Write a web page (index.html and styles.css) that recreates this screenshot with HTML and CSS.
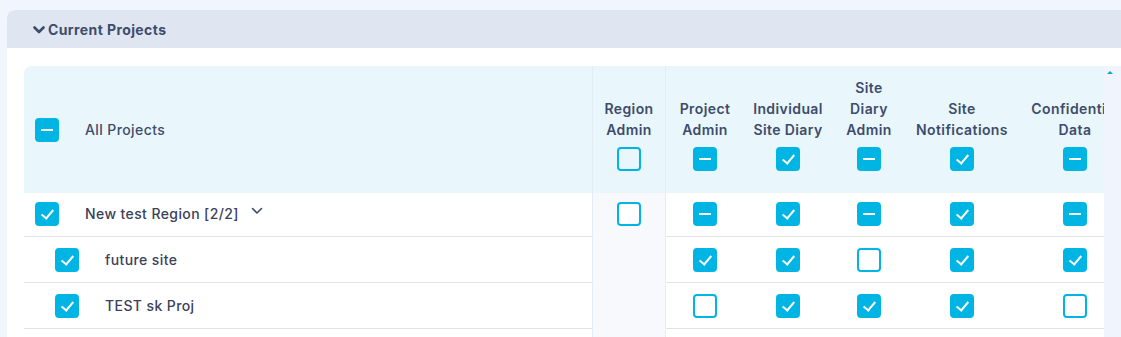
FILE: index.html
```html
<!DOCTYPE html>
<html lang="en">
<head>
<meta charset="UTF-8">
<meta name="viewport" content="width=device-width, initial-scale=1.0">
<title>Current Projects</title>
<link rel="stylesheet" href="styles.css">
</head>
<body>
    <div class="page">
        <div class="panel">
            <div class="panel-header">
                <svg class="caret" width="12" height="8" viewBox="0 0 12 8"><path d="M1.5 1.5 L6 6 L10.5 1.5" fill="none" stroke="#3e4c6b" stroke-width="2.6" stroke-linecap="round" stroke-linejoin="round"/></svg>
                <span>Current Projects</span>
            </div>
            <div class="panel-body">
                <div class="table-wrap">
                    <table class="perm-table">
                        <colgroup>
                            <col style="width: 568px">
                            <col style="width: 74px">
                            <col style="width: 78px">
                            <col style="width: 88px">
                            <col style="width: 74px">
                            <col style="width: 112px">
                            <col style="width: 114px">
                        </colgroup>
                        <thead>
                            <tr>
                                <th class="name-cell">
                                    <div class="name">
                                        <span class="cb partial"></span>
                                        <span>All Projects</span>
                                    </div>
                                </th>
                                <th class="region-col"><div class="label">Region<br>Admin</div><span class="cb"></span></th>
                                <th><div class="label">Project<br>Admin</div><span class="cb partial"></span></th>
                                <th><div class="label">Individual<br>Site Diary</div><span class="cb checked"></span></th>
                                <th><div class="label">Site<br>Diary<br>Admin</div><span class="cb partial"></span></th>
                                <th><div class="label">Site<br>Notifications</div><span class="cb checked"></span></th>
                                <th><div class="label">Confidential<br>Data</div><span class="cb partial"></span></th>
                            </tr>
                        </thead>
                        <tbody>
                            <tr class="region-row">
                                <td class="name-cell">
                                    <div class="name">
                                        <span class="cb checked"></span>
                                        <span>New test Region [2/2]</span>
                                        <svg class="expand" width="12" height="8" viewBox="0 0 12 8"><path d="M1.5 1.5 L6 6 L10.5 1.5" fill="none" stroke="#3e4c6b" stroke-width="1.6" stroke-linecap="round" stroke-linejoin="round"/></svg>
                                    </div>
                                </td>
                                <td class="region-col"><span class="cb"></span></td>
                                <td><span class="cb partial"></span></td>
                                <td><span class="cb checked"></span></td>
                                <td><span class="cb partial"></span></td>
                                <td><span class="cb checked"></span></td>
                                <td><span class="cb partial"></span></td>
                            </tr>
                            <tr>
                                <td class="name-cell">
                                    <div class="name sub">
                                        <span class="cb checked"></span>
                                        <span>future site</span>
                                    </div>
                                </td>
                                <td class="region-col"></td>
                                <td><span class="cb checked"></span></td>
                                <td><span class="cb checked"></span></td>
                                <td><span class="cb"></span></td>
                                <td><span class="cb checked"></span></td>
                                <td><span class="cb checked"></span></td>
                            </tr>
                            <tr>
                                <td class="name-cell">
                                    <div class="name sub">
                                        <span class="cb checked"></span>
                                        <span>TEST sk Proj</span>
                                    </div>
                                </td>
                                <td class="region-col"></td>
                                <td><span class="cb"></span></td>
                                <td><span class="cb checked"></span></td>
                                <td><span class="cb checked"></span></td>
                                <td><span class="cb checked"></span></td>
                                <td><span class="cb"></span></td>
                            </tr>
                            <tr class="tail-row">
                                <td class="name-cell"></td>
                                <td class="region-col"></td>
                                <td></td><td></td><td></td><td></td><td></td>
                            </tr>
                        </tbody>
                    </table>
                </div>
                <div class="scrollbar">
                    <span class="scroll-up"></span>
                </div>
            </div>
        </div>
    </div>
</body>
</html>
```

FILE: styles.css
```css
body {
    margin: 0;
    background-color: #f1f5fd;
    font-family: Inter, "Noto Sans", sans-serif;
    letter-spacing: 0.4px;
    color: #3e4c6b;
    overflow: hidden;
}
.page {
    padding: 10px 0 0 7px;
}
.panel {
    background-color: #ffffff;
    border-radius: 8px 0 0 0;
    overflow: hidden;
}
.panel-header {
    display: flex;
    align-items: center;
    gap: 3px;
    height: 38px;
    padding-left: 26px;
    background-color: #dfe6f1;
    font-size: 14px;
    font-weight: 700;
    color: #3e4c6b;
}
.caret {
    margin-top: 1px;
}
.panel-body {
    display: flex;
    padding: 18px 0 0 17px;
    height: 271px;
}
.table-wrap {
    width: 1080px;
    overflow: hidden;
    flex-shrink: 0;
}
.scrollbar {
    flex: 1;
    background-color: #f0f4fc;
    padding: 5px 0 0 3px;
}
.scroll-up {
    display: block;
    width: 0;
    height: 0;
    border-left: 3px solid transparent;
    border-right: 3px solid transparent;
    border-bottom: 3px solid #00a8dc;
}
.perm-table {
    width: 1108px;
    table-layout: fixed;
    border-collapse: separate;
    border-spacing: 0;
}
.perm-table thead th {
    background-color: #e9f7fc;
    height: 127px;
    padding: 0 0 22px 0;
    box-sizing: border-box;
    vertical-align: bottom;
    text-align: center;
    font-size: 14px;
    font-weight: 600;
    color: #3e4c6b;
    white-space: nowrap;
}
.perm-table thead th:first-child {
    border-top-left-radius: 8px;
}
.perm-table thead th.name-cell {
    vertical-align: middle;
    padding: 0;
    text-align: left;
    font-weight: 500;
}
.label {
    line-height: 21px;
    margin-bottom: 7px;
}
.perm-table td {
    height: 45px;
    padding: 0;
    text-align: center;
    vertical-align: middle;
    border-bottom: 1px solid #e2e3e6;
    font-size: 14px;
    font-weight: 500;
    color: #3b4158;
}
.perm-table .region-row td {
    height: 44px;
    padding-bottom: 2px;
    box-sizing: border-box;
}
.perm-table td.name-cell {
    text-align: left;
}
.perm-table .region-col {
    border-left: 1px solid #e4ecf6;
    border-right: 1px solid #e4ecf6;
}
.perm-table td.region-col {
    background-color: #f7f9fc;
    border-bottom-color: #f7f9fc;
}
.perm-table .tail-row td {
    border-bottom: none;
    height: 10px;
}
.name {
    display: flex;
    align-items: center;
    padding-left: 11px;
}
.name .cb {
    margin-right: 26px;
}
.name.sub {
    padding-left: 31px;
}
.expand {
    margin-left: 12px;
    margin-top: -5px;
}
.cb {
    display: inline-block;
    position: relative;
    width: 24px;
    height: 24px;
    box-sizing: border-box;
    border: 2px solid #00b5e3;
    border-radius: 4px;
    background-color: transparent;
    vertical-align: middle;
    flex-shrink: 0;
}
td .cb {
    background-color: #ffffff;
}
.cb.checked,
.cb.partial {
    background-color: #00b5e3;
}
.cb.partial::after {
    content: "";
    position: absolute;
    left: 4px;
    top: 9px;
    width: 12px;
    height: 2px;
    background-color: #ffffff;
}
.cb.checked::after {
    content: "";
    position: absolute;
    left: 7px;
    top: 3px;
    width: 5px;
    height: 10px;
    border-right: 2px solid #ffffff;
    border-bottom: 2px solid #ffffff;
    transform: rotate(40deg);
}
```
